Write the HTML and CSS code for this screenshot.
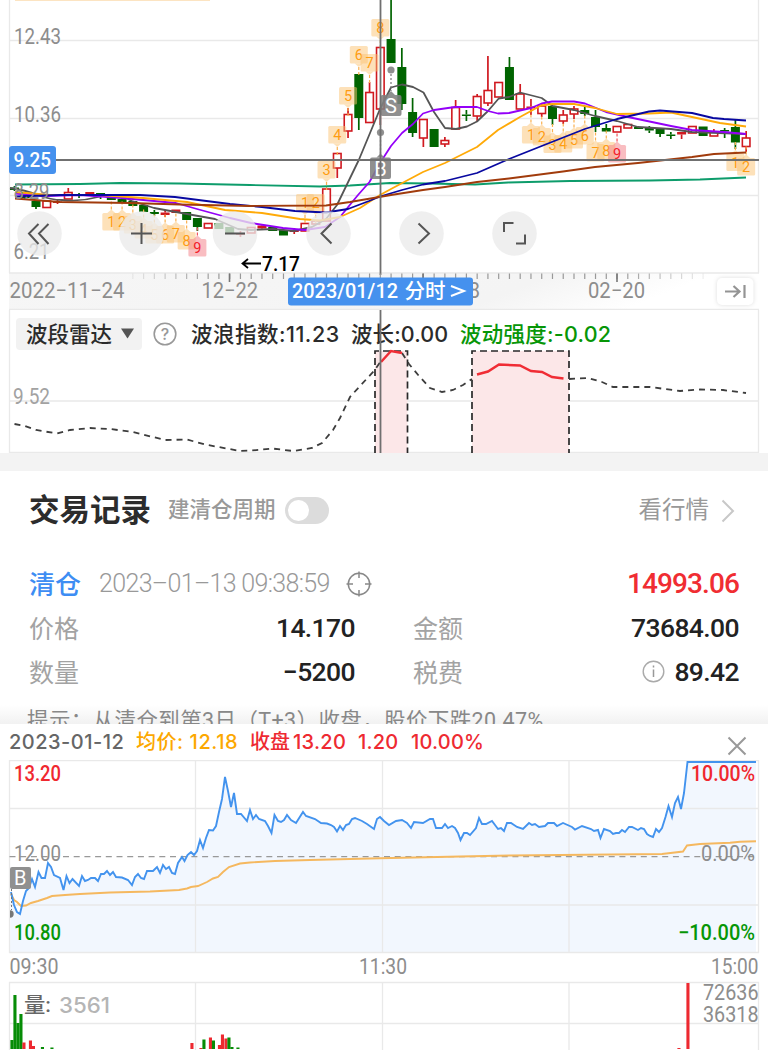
FILE: index.html
```html
<!DOCTYPE html>
<html lang="zh-CN">
<head>
<meta charset="utf-8">
<title>交易记录</title>
<link rel="stylesheet" href="styles.css">
</head>
<body>
<main class="page">
  <section class="kline">
    <svg class="plot" width="768" height="310" viewBox="0 0 768 310">
      <defs>
        <linearGradient id="axisFade" x1="0" x2="1" y1="0" y2="0.12">
          <stop offset="0" stop-color="#f6f6f6"/><stop offset="0.72" stop-color="#f4f4f4"/><stop offset="0.93" stop-color="#fff"/>
        </linearGradient>
        <linearGradient id="tickFade" gradientUnits="userSpaceOnUse" x1="130" x2="705" y1="0" y2="0">
          <stop offset="0" stop-color="#999" stop-opacity="0.15"/><stop offset="0.15" stop-color="#999"/><stop offset="0.85" stop-color="#999"/><stop offset="1" stop-color="#999" stop-opacity="0.15"/>
        </linearGradient>
      </defs>
      <rect x="9" y="273" width="750" height="36" fill="url(#axisFade)"/>
      <path class="grid" d="M9.5 0V273M758.5 0V273M9 40.5H759M9 118.500H759M9 195.500H759M9 273H759M9 309.500H759"/>
      <rect x="15" y="-2" width="195" height="2.700" fill="#fbd9a8"/>
      <g id="candles"></g>
      <g id="tags"></g>
      <g class="ma">
        <path stroke="#0d9c6b" d="M15 184.500L80 184L120 183L180 183.500L250 185L320 186.500L350 185.500L390 183L430 183.500L475 184.500L508 182.500L570 181L650 180.500L700 179.500L746 177.500"/>
        <path stroke="#555" d="M10 188Q25 190 38 195T62 200Q80 202 98 197T132 201L154 208L165 210L187 214L215 219L238 229L251 230L273 229L294 231L312 227L326 219L337 205L358.800 160L380 109L391 87.500L402 84.500L413 87L423.500 92.500L434 112L445 128L456 129L467 126.500L477 121.500L488 111L498.700 98.500L509 97L520 92.500L541.700 98L552.500 106L574 110L595 116L617 121L638 127L671 129L692 132L746 134"/>
        <path stroke="#9400f8" d="M15 193.500L45 196L80 195L122 198L154 201L176 203L197 209L230 218L251 223L283 228L305 230L325 227L340 217L358 195L369.500 182L380 163L391 146L402 133L413 124L423 113.500L434 110L455 107L477 107L488 111L498 113.500L509 113L531 108L541.700 103.500L552 101.500L574 101.500L585 103.500L606 112L628 117L671 126L692 130L724 132L746 134"/>
        <path stroke="#ffaa08" d="M15 192L50 195L100 195L143 198L187 202L225 210L262 213L300 219L320 220.500L340 217L360 208L380 195L391 189L423 172L445 163L477 147L498 130L520 117L541 105.500L552 104L574 104L595 108L617 114L649 113.500L671 112.500L692 117L720 123L746 126.500"/>
        <path stroke="#0808a0" d="M15 196.500L60 195L140 195L175 197L230 204L262 207L295 211L326 212.500L348 209L369 201L380 196.500L402 190L423 184.500L445 181L477 173L509 159L541.700 146L584.800 129L617 119L649 111.500L660 110.500L692 113L713 118L724 119L746 120.500"/>
        <path stroke="#a13b0c" d="M15 198.500L60 202L130 203L180 204.500L250 206L326 205.500L350 202L391 195L423 190L445 187L477 182L509 178.500L563 171.500L595 167L638 163L692 157L714 154L746 152.500"/>
      </g>
      <g class="axis-label">
        <text x="14" y="43.500" textLength="47" lengthAdjust="spacingAndGlyphs">12.43</text>
        <text x="14" y="121.500" textLength="47" lengthAdjust="spacingAndGlyphs">10.36</text>
        <text x="13.500" y="198.500" textLength="36" lengthAdjust="spacingAndGlyphs">8.29</text>
        <text x="13.500" y="258.500" textLength="36" lengthAdjust="spacingAndGlyphs">6.21</text>
      </g>
      <g fill="#eaeaea" fill-opacity="0.78">
        <circle cx="39.500" cy="233.500" r="22.300"/><circle cx="141.500" cy="233.500" r="22.300"/><circle cx="235" cy="233.500" r="22.300"/>
        <circle cx="328.500" cy="233.500" r="22.300"/><circle cx="421.500" cy="233.500" r="22.300"/><circle cx="514.500" cy="233.500" r="22.300"/>
      </g>
      <g fill="none" stroke="#555" stroke-width="2">
        <path d="M38.500 224L29 233.500L38.500 244M48.500 224L39 233.500L48.500 244M131 233.500H152M141.500 223V244M225 233.500H245M331.500 223.500L321.500 233.500L331.500 243.500M418.500 223.500L429 233.500L418.500 243.500"/>
        <path d="M504 232V223H513.500M516 243.500H525V234.500"/>
      </g>
      <g fill="none" stroke="#000" stroke-width="1.800"><path d="M261 263.500H242.500M248 259L242.500 263.500L248 268"/></g>
      <text class="low" x="262" y="271" textLength="38" lengthAdjust="spacingAndGlyphs">7.17</text>
      <g fill="#808080" fill-opacity="0.88">
        <rect x="380.500" y="95" width="21" height="21" rx="2"/><rect x="370" y="157.500" width="21" height="21.500" rx="2"/>
        <path d="M387 95L391 91L395 95zM376.500 157.500L380.500 153.500L384.500 157.500z"/>
        <circle cx="391" cy="70" r="3.600"/><circle cx="380.500" cy="132.500" r="3.600"/>
      </g>
      <path d="M391 74V91M380.500 136V154" stroke="#777" stroke-width="1.200" stroke-dasharray="2 2"/>
      <text class="marker" x="391" y="113" text-anchor="middle">S</text><text class="marker" x="380.500" y="176" text-anchor="middle">B</text>
      <path d="M56 160H759M380.500 0V275" stroke="#707070" stroke-width="1.800"/>
      <rect x="9" y="146" width="47" height="28" rx="3" fill="#4591ee"/>
      <text class="cursor-label" x="13.500" y="167" textLength="37.500" lengthAdjust="spacingAndGlyphs">9.25</text>
      <g id="ticks" stroke="url(#tickFade)" stroke-width="1.200"></g>
      <path d="M229.500 273.500V282M423 273.500V282M617 273.500V282" stroke="#777" stroke-width="1.600"/>
      <g class="date-label">
        <text x="9.500" y="298" textLength="115" lengthAdjust="spacingAndGlyphs">2022−11−24</text>
        <text x="201.500" y="298" textLength="56.500" lengthAdjust="spacingAndGlyphs">12−22</text>
        <text x="468.500" y="298" textLength="11.500" lengthAdjust="spacingAndGlyphs">8</text>
        <text x="588" y="298" textLength="57" lengthAdjust="spacingAndGlyphs">02−20</text>
      </g>
      <rect x="288" y="277.500" width="185" height="28" rx="3" fill="#4591ee"/>
      <text class="cursor-label" x="292" y="298" textLength="106" lengthAdjust="spacingAndGlyphs">2023/01/12</text>
      <text class="cursor-label" x="404.500" y="298" textLength="41" lengthAdjust="spacingAndGlyphs">分时</text>
      <path d="M451 286L464 291L451 296" fill="none" stroke="#fff" stroke-width="2"/>
      <rect class="jump" x="717" y="278" width="36.500" height="27" rx="5"/>
      <path d="M725 291.500H739M733.500 286L739.500 291.500L733.500 297M744.500 285V298" fill="none" stroke="#949494" stroke-width="2.200"/>
    </svg>
  </section>

  <section class="radar">
    <svg class="plot" width="768" height="143" viewBox="0 310 768 143">
      <path class="grid" d="M9.500 310V453M758.500 310V453M9 401H759M9 452.500H759"/>
      <path d="M375 351H407.500V453H375zM472 351H569V453H472z" fill="#fce7e8"/>
      <path d="M375 453V351H407.500V453M472 453V351H569V453" fill="none" stroke="#292929" stroke-width="1.700" stroke-dasharray="7 4"/>
      <path d="M14.500 424L25 426L36 430L57 433.500L70 430L90 428L110 429L133 432L165 440L187 439.500L205 444.500L240 451L252 450.500L272 448.500L293 451L312 448L322 443L333 430L340 418L350 397L360 386L374 371L381 361M402 353L409 364L419 376L430 388L442 392L453 390L463 385L472 379M569 379L588 378L602 382L613 387L650 387L680 391L700 389.500L723 390L746 393" fill="none" stroke="#3d3d3d" stroke-width="1.800" stroke-dasharray="6 5"/>
      <path d="M381 362L391 351L402 353M477 374.500L488 371.500L499 364.500L520 365.500L531 371L542 372L552 377L563.500 378.500" fill="none" stroke="#f02d35" stroke-width="2.500"/>
      <text class="soft-label" x="13" y="404" textLength="37" lengthAdjust="spacingAndGlyphs">9.52</text>
    </svg>
    <header class="radar-head">
      <span class="picker">波段雷达<svg width="13" height="11" viewBox="0 0 13 11"><path d="M0 0.500H13L6.500 10.500z" fill="#555"/></svg></span>
      <svg class="help" width="24" height="24" viewBox="0 0 24 24"><circle cx="12" cy="12" r="10.800" fill="none" stroke="#999" stroke-width="1.600"/><text x="12" y="17.500" text-anchor="middle" font-size="16" fill="#999">?</text></svg>
      <span class="stat wave">波浪指数:11.23</span>
      <span class="stat length">波长:0.00</span>
      <span class="stat force">波动强度:-0.02</span>
    </header>
    <svg class="plot" width="768" height="143" viewBox="0 310 768 143"><path d="M380.500 310V453" stroke="#707070" stroke-width="1.800"/></svg>
  </section>

  <section class="records">
    <header class="records-head">
      <h1>交易记录</h1><span class="cycle">建清仓周期</span><span class="switch"><i></i></span>
      <span class="market">看行情</span>
      <svg width="14" height="24" viewBox="0 0 14 24"><path d="M1.500 1.500L12 12L1.500 22.500" fill="none" stroke="#c8c8c8" stroke-width="2"/></svg>
    </header>
    <div class="trade">
      <b>清仓</b><time>2023–01–13 09:38:59</time>
      <svg width="28" height="28" viewBox="0 0 28 28"><circle cx="14" cy="14" r="10.700" fill="none" stroke="#888" stroke-width="1.500"/><path d="M14 1.500V8M14 20V26.500M1.500 14H8M20 14H26.500" stroke="#888" stroke-width="1.500"/></svg>
      <strong>14993.06</strong>
    </div>
    <dl class="facts">
      <div><dt>价格</dt><dd>14.170</dd></div>
      <div><dt>金额</dt><dd>73684.00</dd></div>
      <div><dt>数量</dt><dd>−5200</dd></div>
      <div><dt>税费</dt><dd><svg width="23" height="23" viewBox="0 0 23 23"><circle cx="11.500" cy="11.500" r="10.300" fill="none" stroke="#aaa" stroke-width="1.400"/><path d="M11.500 9.500V17M11.500 5.500V7.500" stroke="#999" stroke-width="1.500"/></svg>89.42</dd></div>
    </dl>
    <p class="hint">提示：从清仓到第3日（T+3）收盘，股价下跌20.47%</p>
  </section>

  <section class="day">
    <header class="day-head">
      <span class="d-date">2023-01-12</span><span class="d-avg">均价: 12.18</span><span class="d-close">收盘</span><span class="d-price">13.20</span><span class="d-diff">1.20</span><span class="d-rate">10.00%</span>
      <svg width="20" height="20" viewBox="0 0 20 20"><path d="M1.500 1.500L18.500 18.500M18.500 1.500L1.500 18.500" stroke="#999" stroke-width="2"/></svg>
    </header>
    <svg class="day-plot" width="768" height="290" viewBox="0 760 768 290">
      <path id="priceArea" fill="#f2f7fe"/>
      <path class="grid" d="M9.500 760.500V952.500H758.500V760.500zM195.500 760V953M382.500 760V953M569 760V953M9 808.500H759M9 905H759M9.500 1050V982.500H758.500V1050M195.500 983V1050M382.500 983V1050M569 983V1050M9 1023.500H759"/>
      <path d="M9.500 856.700H758" stroke="#999" stroke-width="1.300" stroke-dasharray="6 4.700"/>
      <path d="M11 894L14 900L17 902L21 906L26 905.500L31 903L38 901L47 898L52 896L65 895L80 894L110 892.500L150 891.500L179 890L187 888.500L191 887L198 886L207 882L213 878.500L218 877L223 872L229 867L240 863.500L250 862.500L275 861L310 860L380 858.300L460 856.500L510 855.500L662 854L683 851.500L687 845.500L700 844L730 842.700L740 841.800L756 841.300" fill="none" stroke="#f5b85f" stroke-width="1.900"/>
      <path id="priceLine" fill="none" stroke="#4393ee" stroke-width="1.900"/>
      <g class="axis-label">
        <text class="up" x="14" y="781" textLength="47" lengthAdjust="spacingAndGlyphs">13.20</text>
        <text x="14" y="860.500" textLength="47" lengthAdjust="spacingAndGlyphs">12.00</text>
        <text class="down" x="14" y="940" textLength="47" lengthAdjust="spacingAndGlyphs">10.80</text>
        <text class="up" x="691" y="781" textLength="64" lengthAdjust="spacingAndGlyphs">10.00%</text>
        <text x="701" y="860.500" textLength="54" lengthAdjust="spacingAndGlyphs">0.00%</text>
        <text class="down" x="678" y="940" textLength="77" lengthAdjust="spacingAndGlyphs">−10.00%</text>
        <text x="9.500" y="974" textLength="49" lengthAdjust="spacingAndGlyphs">09:30</text>
        <text x="359" y="974" textLength="48" lengthAdjust="spacingAndGlyphs">11:30</text>
        <text x="711" y="974" textLength="47.500" lengthAdjust="spacingAndGlyphs">15:00</text>
        <text x="703" y="1000" textLength="55.500" lengthAdjust="spacingAndGlyphs">72636</text>
        <text x="703" y="1022" textLength="55.500" lengthAdjust="spacingAndGlyphs">36318</text>
      </g>
      <rect x="10" y="867" width="21" height="22" rx="2" fill="#909090"/>
      <text class="marker" x="20.300" y="885" text-anchor="middle">B</text>
      <path d="M11.500 889V910" stroke="#777" stroke-dasharray="2 2"/><path d="M10 910.300A3.700 3.700 0 0 1 10 917.700z" fill="#777"/>
      <g id="volume"></g>
      <text x="24" y="1012" class="vol-name" textLength="27" lengthAdjust="spacingAndGlyphs">量:</text>
      <text x="59" y="1012.500" class="vol-value" textLength="51" lengthAdjust="spacingAndGlyphs">3561</text>
    </svg>
  </section>
</main>
<script src="charts.js"></script>
</body>
</html>
```

FILE: styles.css
```css
* { box-sizing: border-box; }
body { margin: 0; background: #fff; color: #2b2b2b; font-family: Roboto, "Noto Sans CJK SC", sans-serif; }
svg { display: block; flex: none; }
.page { width: 768px; height: 1050px; overflow: hidden; display: flex; flex-direction: column; }

.kline { height: 310px; flex: none; }
.grid { fill: none; stroke: #e9e9e9; stroke-width: 1.3; }
.ma path { fill: none; stroke-width: 1.8; stroke-linejoin: round; }
.axis-label text, .date-label text, .soft-label { font-size: 21.5px; fill: #8d8d8d; }
.soft-label { fill: #a2a2a2; }
.axis-label .up { fill: #f0282f; font-weight: 500; }
.axis-label .down { fill: #069606; font-weight: 500; }
.low { font-size: 21px; font-weight: 500; fill: #000; }
.marker { font-size: 20px; fill: #fff; }
.cursor-label { font-size: 21px; font-weight: 500; fill: #fff; }
.jump { fill: #fff; filter: drop-shadow(0 0 2px #ddd); }
.tag { fill: #fcc474; fill-opacity: .5; }
.tag.hot { fill: #f47c84; }
.tag-text { font-size: 14.5px; fill: #ff9c12; text-anchor: middle; }
.tag-text.hot { fill: #f3202a; }

.radar { position: relative; height: 143px; flex: none; }
.radar .plot { position: absolute; inset: 0; }
.radar-head { position: relative; display: flex; align-items: center; padding: 6px 0 0 16px; height: 41px; font: 500 21.5px/32px Inter, "Noto Sans CJK SC", sans-serif; white-space: nowrap; }
.picker { display: flex; align-items: center; justify-content: space-between; width: 126px; height: 32px; padding: 0 8px 0 10px; background: #f2f2f2; border-radius: 4px; }
.help { margin: 0 14px 0 11px; font-family: Inter, sans-serif; }
.wave { width: 160px; letter-spacing: .5px; }
.length { width: 109px; letter-spacing: .1px; }
.force { color: #079607; letter-spacing: .25px; }

.records { height: 271px; flex: none; border-top: 18px solid #f3f3f3; padding: 17px 29px 0; overflow: hidden; }
.records-head { display: flex; align-items: center; height: 46px; color: #999; font-size: 21.5px; }
h1 { margin: 0 17px 0 0; color: #2c2c2c; font-size: 30.500px; line-height: 46px; font-weight: 700; }
.cycle { font-weight: 500; line-height: 30px; margin-bottom: 3px; }
.switch { width: 44px; height: 27px; margin: 0 0 2px 9px; padding: 3px; border-radius: 14px; background: #dcdcdc; }
.switch i { display: block; width: 21px; height: 21px; border-radius: 50%; background: #fff; }
.market { margin: 0 12px 3px auto; font-size: 23.500px; font-weight: 400; line-height: 32px; }
.records-head > svg { margin-right: 4px; }
.trade { display: flex; align-items: center; height: 45px; margin-top: 27px; }
.trade b { color: #3d8df3; font-size: 26px; font-weight: 500; margin: 0 18px 2px 0; }
.trade time { color: #999; font-size: 25px; font-weight: 300; letter-spacing: -.66px; margin-right: 15px; white-space: nowrap; }
.trade strong { margin-left: auto; color: #f02d32; font-size: 28px; font-weight: 500; letter-spacing: -.9px; }
.facts { display: grid; grid-template-columns: 326px 326px; column-gap: 58px; grid-auto-rows: 44px; margin: 0; }
.facts div { display: flex; align-items: center; justify-content: space-between; }
dt { margin-bottom: 2px; color: #a3a3a3; font-size: 25px; font-weight: 400; }
dd { display: flex; align-items: center; gap: 9px; margin: 0 0 1px; color: #222; font-size: 26.500px; font-weight: 500; letter-spacing: -.6px; }
.hint { margin: 11px -29px 0; padding: 0 27px; height: 27px; overflow: hidden; color: #888; font-size: 21.5px; line-height: 32px; letter-spacing: .38px; font-weight: 400; background: linear-gradient(#fff, #f2f2f2 18px); }

.day { background: #fff; }
.day-head { display: flex; height: 36px; padding: 0 20px 0 9px; font: 500 20px/36px Inter, "Noto Sans CJK SC", sans-serif; color: #666; white-space: nowrap; }
.d-date { width: 127px; letter-spacing: .5px; }
.d-avg { width: 114px; color: #fca800; letter-spacing: .55px; }
.d-close { width: 43px; color: #ee2a31; }
.d-price { width: 65px; color: #ee2a31; letter-spacing: .3px; }
.d-diff { width: 53px; color: #ee2a31; letter-spacing: .2px; }
.d-rate { color: #ee2a31; letter-spacing: .2px; }
.day-head svg { margin: 12px 1px 0 auto; }
.vol-name { font-size: 21px; font-weight: 500; fill: #666; }
.vol-value { font: 500 21px Inter, sans-serif; fill: #b5b5b5; }
```

FILE: charts.js
```js
const NS = 'http://www.w3.org/2000/svg';
const X0 = 36, STEP = 10.76;
function add(parent, name, attrs, text) {
  const el = document.createElementNS(NS, name);
  for (const k in attrs) el.setAttribute(k, attrs[k]);
  if (text !== undefined) el.textContent = text;
  document.getElementById(parent).appendChild(el);
}
// kind (g = falling, r = rising hollow, f = rising filled), body top, body bottom, high, low
const candles = [
  'g 187.5 190 186 191','g 194.5 198 193 200','g 201 207 200 209','r 201 207.5','f 201.5 203 199 204','r 192.5 199 188 199','g 194.5 195.5 193 198','f 192 195','g 193 196 193 199','g 197 200','g 199 203','g 201 206','g 205 212','g 212 214 210 216','f 212.5 215 210 217','f 209.5 213','g 212 220','g 218 227 218 231','r 223.5 228','g 223 229','g 227 233','f 233 235 231 237','r 227.5 233','f 225.5 228.5 224 230','g 227 231','g 230 235.5','f 230.5 232 228 234','r 223.5 231','r 221 224','r 189 221','r 153.500 168 153 178','r 114.500 131 108 138','g 74 118 74 130','r 92.500 122.500 82 123','r 47.500 109 47 125','g 39 63 0 63','g 67 104 48 110','g 112 133 98 137','r 119.500 138 119 147','g 129 147','r 140.500 144 137 147','r 107.500 129 100 129','g 114.500 116 110 121','r 96.500 116 94 121','r 90.500 103 56 106','r 82.500 97','g 67 100 57 100','r 94 109 84 109','f 106.500 108.500 99 115','r 106 113.500 103 117','g 106 119 106 125','r 115 121 110 124','r 109 114 106 119','g 110 114 106 116','g 117 127 110 132','g 128 131.500 124 132','r 126.500 132','r 124.500 128','g 127 129','g 128 130.500 126 133','g 129 134 129 137','g 134.500 136 132 139','f 132 134.500 132 139','r 126.500 133','g 126.500 136','r 132 136 129 136','g 130 131.500 128 138','g 127 142.500 120 149','r 138 146.500 131 152'
];
candles.forEach((row, i) => {
  const [kind, ...v] = row.split(' ');
  const [top, bottom, high = top, low = bottom] = v.map(Number);
  const x = X0 + STEP * (i - 2), color = kind === 'g' ? '#006400' : '#d01920';
  add('candles', 'path', { d: `M${x} ${high}V${top}M${x} ${bottom}V${low}`, stroke: color, 'stroke-width': 1.7 });
  const hollow = kind === 'r';
  add('candles', 'rect', { x: x - (hollow ? 3.8 : 4.5), y: top, width: hollow ? 7.6 : 9, height: bottom - top, fill: hollow ? '#fff' : color, stroke: hollow ? color : 'none', 'stroke-width': 1.6 });
});
// candle index, label top, digit, pointer direction (1 = up, -1 = down)
const tags = [[7,213,1,1],[8,213,2,1],[9,216,3,1],[10,221,4,1],[11,226,5,1],[12,226,6,1],[13,225,7,1],[14,232,8,1],[15,239,9,1],[25,194,1,-1],[26,194,2,-1],[27,161,3,-1],[28,126,4,-1],[29,87,5,-1],[30,46,6,-1],[31,54,7,-1],[32,19,8,-1],[46,126,1,1],[47,128,2,1],[48,135.5,3,1],[49,135,4,1],[50,131,5,1],[51,127,6,1],[52,144,7,1],[53,142,8,1],[54,145,9,1],[65,153.5,1,1],[66,158,2,1]];
tags.forEach(([i, y, n, dir]) => {
  const x = X0 + STEP * i, hot = n === 9 ? ' hot' : '';
  const base = dir > 0 ? y : y + 17.5, tip = base - dir * 3.5;
  add('tags', 'rect', { class: 'tag' + hot, x: x - 9, y, width: 18, height: 17.5, rx: 1.5 });
  add('tags', 'path', { class: 'tag' + hot, d: `M${x - 4} ${base}L${x} ${tip}L${x + 4} ${base}z` });
  add('tags', 'path', { d: `M${x} ${tip}V${tip - dir * 8}`, stroke: hot ? '#f3525a' : '#fbb04e', 'stroke-width': 1.2, 'stroke-dasharray': '3 2' });
  add('tags', 'text', { class: 'tag-text' + hot, x, y: y + 14 }, n);
});
let tickPath = '';
for (let i = 9; i < 63; i++) tickPath += `M${X0 + STEP * i} 273.500V279`;
add('ticks', 'path', { d: tickPath });

const price = '11,892 14,905 17,912 20,914 23,901 26,891 29,888 32,879 35,887 38.500,872 41.500,878 45,878 48,863 51,867 54,875 60,878 63.500,890 66.500,876 69.500,883 72.500,879 79,886 82,876 85,881 88,880 91,878 95,878 98,881 101,874 104,874 107,871 110,875 113,872 116,877 122,877.500 128,880 132,885 135,877 138,874 141,878 144,879 147,871 153,871 157,867 160,873 163,865 166,869 169,867 172,873 175,874 178,863 182,857 184.500,861 187.500,855 191,852 194,855 197,851 200,840 203,848 206,838 209,830 213,830.500 216,826 219,812 222,799 225,777 228,791 231,807 234,793 237,814 241,814 247,821 250,810 253,819 256,815 259,819 265,821 268,826 271.500,833 274.500,815 278,821 281,822 284,820 287,815 291,820 296,823 303,812 306,816 315,819 321,823 327,823.500 331,825 334,827 337,831.500 340,826 343,830 346,825 349,824 352,819 355,818 362,821 367,824 374,829 377,819 380,817 384,821 389,825 396,821 402,820 407,823 411,828 414,822 423,823 430,819 433,819 436,828 442,828 445,824 448,828 452,826 455,828 458,833 460.500,840 464,833 467,833 470,835 476,828 479,818 482,824 486,824 492,821 498,829 501,828 504,831 507,823 511,823 517,827 523,829 529,823 532,825 535,824 539,827 545,826 548,823 554,823 557,826 563,823 572,827 575,829.500 582,826 591,829 594,831 598,830 600.500,838 604,829 610,831 613,834 616,833 619,833 622,830 625,832 629,827 632,827 638,830 641,828 644,829 647,834 650,836 653,837 656,829 659,832 662,828 665.500,817 668.500,806 672,817 675,803 678,797 681,809 684,793 687.500,762 756,762';
document.getElementById('priceLine').setAttribute('d', 'M' + price);
document.getElementById('priceArea').setAttribute('d', 'M' + price + 'L756,952L10,952z');
// x, bar top, color
const volume = [[12,1040,'g'],[15,995,'g'],[18,1023,'g'],[21,1014,'g'],[24,1042.5,'r'],[30.5,1040.5,'r'],[33.5,1046,'r'],[42.5,1047,'g'],[52,1047.5,'g'],[192,1043,'r'],[201,1048,'r'],[204,1039.5,'g'],[210.5,1037.5,'r'],[213.5,1040.5,'g'],[219.5,1045,'r'],[222.5,1034.5,'r'],[226,1038.5,'r'],[229,1037.5,'g'],[232,1047,'g'],[238,1047.5,'g'],[679,1048,'r'],[688,983,'r']];
volume.forEach(([x, y, c]) => add('volume', 'rect', { x: x - 1.6, y, width: 3.1, height: 1049 - y, fill: c === 'g' ? '#068c06' : '#ed2930' }));
```
